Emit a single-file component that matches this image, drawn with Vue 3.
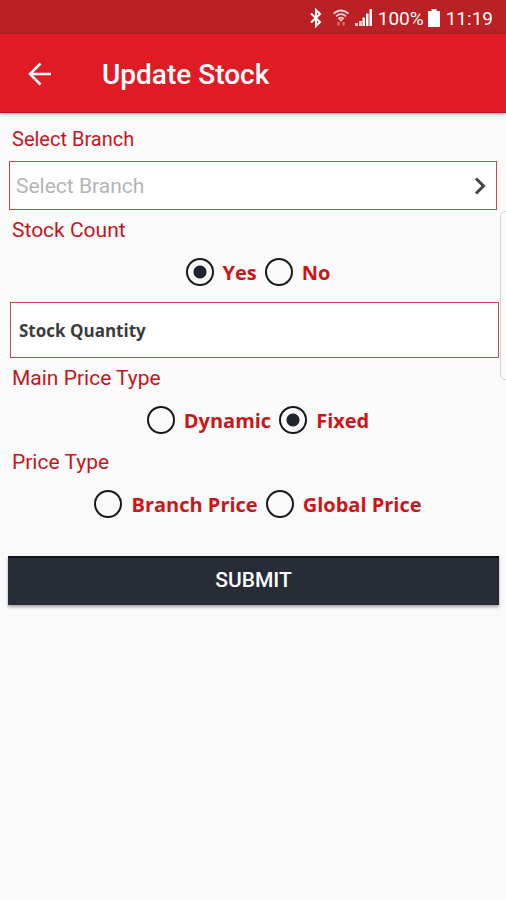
<script setup>
import { ref } from 'vue'

const branch = ref('')
const quantity = ref('')
const stockCount = ref('Yes')
const mainPrice = ref('Fixed')
const priceType = ref('')
</script>

<template>
  <div class="screen">
    <div class="status">
      <svg class="bluetooth" viewBox="0 0 14 20" width="14" height="20">
        <path d="M2 5.500 11 14 7 18V2l4 4-9 8.500" fill="none" stroke="#fff" stroke-width="2" />
      </svg>
      <svg class="wifi" viewBox="0 0 18 20" width="18" height="20">
        <g fill="none" stroke="#f6d5d6" stroke-width="1.700">
          <path d="M1.500 5.500Q9-.5 16.500 5.500" />
          <path d="M4 8.300Q9 4 14 8.300" />
          <path d="M6.200 10.800Q9 8.500 11.800 10.800" />
        </g>
        <path d="M6.800 11.300h4.400L9 13.800z" fill="#f6d5d6" />
        <path d="M6.500 14v3.500M11.500 14v3.500" stroke="#e2686c" stroke-width="2.500" />
      </svg>
      <svg class="signal" viewBox="0 0 18 18" width="18" height="18">
        <path d="M0 17v-3h3v3zM4 17v-5h3v5z" fill="#f2c4c6" />
        <path d="M7.500 17V8.500h2.500V17zM11 17V4.500h2.500V17zM14.500 17V0H17v17z" fill="#fff" />
      </svg>
      <span class="percent">100%</span>
      <svg class="battery" viewBox="0 0 12 18" width="12" height="18">
        <path d="M3.500 0h5v2H12v16H0V2h3.500z" fill="#fff" />
      </svg>
      <span>11:19</span>
    </div>

    <header class="appbar">
      <button class="back" type="button" aria-label="Back">
        <svg viewBox="0 0 24 24" width="24" height="24">
          <path d="M12.500 1.500 2 12l10.500 10.500M2 12h21" fill="none" stroke="#fff" stroke-width="2.500" />
        </svg>
      </button>
      <h1>Update Stock</h1>
    </header>

    <form class="form" @submit.prevent>
      <label class="label branch-label" for="branch">Select Branch</label>
      <div class="select-box">
        <select id="branch" v-model="branch">
          <option value="">Select Branch</option>
        </select>
        <svg class="chevron" viewBox="0 0 12 18" width="12" height="18">
          <path d="m2 1.500 7.500 7.500L2 16.500" fill="none" stroke="#444" stroke-width="3" />
        </svg>
      </div>

      <fieldset>
        <legend class="label">Stock Count</legend>
        <div class="radios">
          <label v-for="o in ['Yes', 'No']" :key="o">
            <input v-model="stockCount" type="radio" name="stock-count" :value="o">{{ o }}
          </label>
        </div>
      </fieldset>

      <input v-model="quantity" class="quantity" type="text" placeholder="Stock Quantity" aria-label="Stock Quantity">

      <fieldset>
        <legend class="label">Main Price Type</legend>
        <div class="radios">
          <label v-for="o in ['Dynamic', 'Fixed']" :key="o">
            <input v-model="mainPrice" type="radio" name="main-price" :value="o">{{ o }}
          </label>
        </div>
      </fieldset>

      <fieldset>
        <legend class="label">Price Type</legend>
        <div class="radios">
          <label v-for="o in ['Branch Price', 'Global Price']" :key="o">
            <input v-model="priceType" type="radio" name="price-type" :value="o">{{ o }}
          </label>
        </div>
      </fieldset>

      <button class="submit" type="submit">SUBMIT</button>
    </form>
    <div class="edge-handle"></div>
  </div>
</template>

<style>
body {
  margin: 0;
  background: #fafafa;
}
</style>

<style scoped>
.screen {
  position: relative;
  min-height: 100vh;
  overflow: hidden;
  background: #fafafa;
  font-family: Roboto, "Liberation Sans", sans-serif;
}

.screen * {
  box-sizing: border-box;
}

.status {
  display: flex;
  align-items: center;
  justify-content: flex-end;
  height: 34px;
  padding: 2px 13px 0 0;
  background: #bb2025;
  color: #fff;
  font-size: 19px;
}

.wifi {
  margin-left: 9px;
}

.signal {
  margin-left: 5px;
}

.percent {
  margin-left: 5px;
}

.battery {
  margin: 0 6px 0 4px;
}

.appbar {
  display: flex;
  align-items: center;
  height: 79px;
  padding: 2px 28px 0;
  background: #e01b24;
  border-bottom: 1px solid #b9151c;
  box-shadow: 0 1px 4px rgba(0, 0, 0, 0.35);
  color: #fff;
}

.back {
  display: flex;
  margin: 0;
  padding: 0;
  border: 0;
  background: none;
}

h1 {
  margin: 2px 0 0 50px;
  font-size: 28px;
  font-weight: 500;
  line-height: 32px;
}

.form {
  padding: 12px 7px 0 8px;
}

.label {
  display: block;
  padding: 0 4px;
  color: #c4161c;
  font-size: 21px;
  line-height: 28px;
}

.branch-label {
  font-size: 20px;
}

.select-box {
  display: flex;
  align-items: center;
  height: 49px;
  margin: 8px 2px 6px 1px;
  padding-right: 10px;
  border: 1px solid #c4474d;
  background: #fff;
}

select {
  flex: 1;
  min-width: 0;
  height: 100%;
  padding: 0 6px;
  border: 0;
  appearance: none;
  background: transparent;
  color: #b5b5b5;
  font: 21px Roboto, "Liberation Sans", sans-serif;
}

fieldset {
  min-width: 0;
  margin: 0;
  padding: 0;
  border: 0;
}

legend {
  float: left;
  width: 100%;
}

.radios {
  clear: both;
  display: flex;
  justify-content: center;
  gap: 8px;
  padding: 14px 0 14px 9px;
}

.radios label {
  display: flex;
  align-items: center;
  gap: 9px;
  height: 28px;
  color: #cc1519;
  font: bold 20px "Open Sans", "Noto Sans", sans-serif;
}

.radios input {
  width: 28px;
  height: 28px;
  margin: 0;
  border: 2px solid #16181d;
  border-radius: 50%;
  appearance: none;
}

.radios input:checked {
  background: radial-gradient(circle, #20242c 6px, transparent 7px);
}

.quantity {
  display: block;
  width: calc(100% - 2px);
  height: 56px;
  margin: 2px 0 6px 2px;
  padding: 0 8px;
  border: 1px solid #c4474d;
  border-radius: 0;
  background: #fff;
  color: #333;
  font: bold 17px "Open Sans", "Noto Sans", sans-serif;
}

.quantity::placeholder {
  color: #3c3c3c;
  opacity: 1;
}

.submit {
  display: block;
  width: 100%;
  height: 49px;
  margin-top: 24px;
  padding: 0 0 4px;
  border: 0;
  border-top: 2px solid #10131b;
  background: #272c37;
  box-shadow: 0 2px 3px rgba(0, 0, 0, 0.35);
  color: #fff;
  font: 500 21px Roboto, "Liberation Sans", sans-serif;
}

.edge-handle {
  position: absolute;
  top: 211px;
  right: -6px;
  width: 12px;
  height: 169px;
  border: 1px solid #d3d6d8;
  border-radius: 7px;
  background: #fafafa;
}
</style>
